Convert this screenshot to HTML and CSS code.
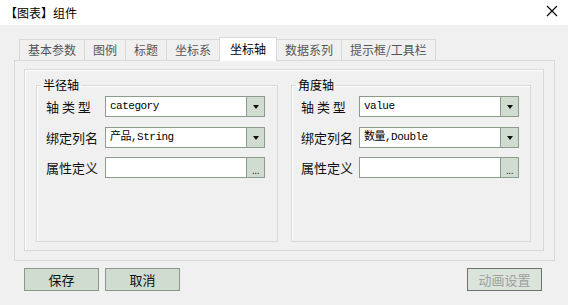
FILE: index.html
```html
<!DOCTYPE html>
<html lang="zh-CN">
<head>
    <meta charset="UTF-8">
    <title>【图表】组件</title>
    <link rel="stylesheet" href="styles.css">
</head>
<body>
    <div class="titlebar">
        <span class="title">【图表】组件</span>
        <svg class="close" width="12" height="12" viewBox="0 0 12 12">
            <path d="M1 1 L11 11 M11 1 L1 11" stroke="#000" stroke-width="1.1" fill="none"/>
        </svg>
    </div>

    <div class="tabs">
        <div class="tab">基本参数</div>
        <div class="tab">图例</div>
        <div class="tab">标题</div>
        <div class="tab">坐标系</div>
        <div class="tab active">坐标轴</div>
        <div class="tab">数据系列</div>
        <div class="tab">提示框/工具栏</div>
    </div>

    <div class="panel">
        <div class="frame">
            <fieldset class="group group-left">
                <legend>半径轴</legend>
                <div class="row">
                    <label class="spaced">轴 类 型</label>
                    <div class="field"><span class="value">category</span><span class="drop"><i></i></span></div>
                </div>
                <div class="row">
                    <label>绑定列名</label>
                    <div class="field"><span class="value">产品,String</span><span class="drop"><i></i></span></div>
                </div>
                <div class="row">
                    <label>属性定义</label>
                    <div class="field"><span class="value"></span><span class="drop dots">...</span></div>
                </div>
            </fieldset>
            <fieldset class="group group-right">
                <legend>角度轴</legend>
                <div class="row">
                    <label class="spaced">轴 类 型</label>
                    <div class="field"><span class="value">value</span><span class="drop"><i></i></span></div>
                </div>
                <div class="row">
                    <label>绑定列名</label>
                    <div class="field"><span class="value">数量,Double</span><span class="drop"><i></i></span></div>
                </div>
                <div class="row">
                    <label>属性定义</label>
                    <div class="field"><span class="value"></span><span class="drop dots">...</span></div>
                </div>
            </fieldset>
        </div>
    </div>

    <div class="actions">
        <button class="btn">保存</button>
        <button class="btn">取消</button>
        <button class="btn disabled">动画设置</button>
    </div>
</body>
</html>
```
FILE: styles.css
```css
body{
    margin: 0;
    width: 568px;
    height: 305px;
    background-color: #f0f0f0;
    font-family: "Noto Sans CJK SC", "Liberation Sans", sans-serif;
    color: #000;
    overflow: hidden;
}
.titlebar{
    height: 25px;
    background-color: #fff;
    display: flex;
    align-items: center;
    justify-content: space-between;
    padding: 0 10px 0 5px;
    font-size: 12px;
}
.title{
    margin-top: -1px;
}
.close{
    margin-top: -3px;
}
.tabs{
    display: flex;
    align-items: flex-end;
    height: 23px;
    margin-top: 12px;
    padding-left: 19px;
}
.tab{
    height: 21px;
    line-height: 20px;
    box-sizing: border-box;
    padding: 0 8px;
    border: 1px solid #d9d9d9;
    border-bottom: none;
    margin-right: -1px;
    font-size: 12px;
    color: #555;
}
.tab.active{
    height: 24px;
    line-height: 22px;
    padding: 0 10px;
    background-color: #fff;
    color: #000;
    margin-bottom: -1px;
    position: relative;
    z-index: 1;
}
.panel{
    width: 541px;
    height: 201px;
    box-sizing: border-box;
    margin-left: 14px;
    border: 1px solid #d9d9d9;
    padding: 8px 10px 9px 9px;
}
.frame{
    height: 182px;
    box-sizing: border-box;
    border: 1px solid #d9d9d9;
    box-shadow: inset 1px 1px 0 #fff;
    padding: 8px 12px 8px 11px;
    display: flex;
    gap: 13px;
}
.group{
    margin: 0;
    padding: 4px 0 0 9px;
    border: 1px solid #d9d9d9;
    box-shadow: inset 1px 1px 0 #fff;
    box-sizing: border-box;
    min-width: 0;
    display: flex;
    flex-direction: column;
    gap: 9.5px;
}
.group-left{
    width: 242px;
}
.group-right{
    width: 240px;
}
legend{
    font-size: 12px;
    line-height: 14px;
    padding: 0 2px;
    margin-left: -5px;
}
.row{
    display: flex;
    align-items: center;
    height: 21px;
}
label{
    width: 59px;
    font-size: 13px;
    color: #111;
}
.group-right label{
    width: 58px;
}
.spaced{
    letter-spacing: 0;
}
.field{
    width: 160px;
    height: 21px;
    box-sizing: border-box;
    border: 1px solid #8c9c8c;
    background-color: #fff;
    display: flex;
}
.value{
    flex: 1;
    padding-left: 4px;
    font-family: "Liberation Mono", "Noto Sans CJK SC", monospace;
    font-size: 11px;
    letter-spacing: -0.5px;
    line-height: 19px;
    white-space: nowrap;
}
.drop{
    width: 17px;
    border-left: 1px solid #8c9c8c;
    background-color: #cfdccf;
    display: flex;
    align-items: center;
    justify-content: center;
}
.drop i{
    width: 0;
    height: 0;
    border-left: 3px solid transparent;
    border-right: 3px solid transparent;
    border-top: 4px solid #111;
    margin-top: 1px;
}
.drop.dots{
    align-items: flex-end;
    font-size: 10px;
    line-height: 12px;
    font-family: "Liberation Sans", sans-serif;
    letter-spacing: -0.5px;
    color: #222;
}
.actions{
    display: flex;
    gap: 6px;
    padding: 7px 26px 0 24px;
}
.btn{
    width: 75px;
    height: 23px;
    box-sizing: border-box;
    border: 1px solid #8a998a;
    background-color: #cfdccf;
    font-family: "Noto Sans CJK SC", sans-serif;
    font-size: 13px;
    color: #111;
    padding: 0;
}
.btn.disabled{
    margin-left: auto;
    background-color: #dae4da;
    border-color: #707070;
    color: #a0a0a0;
}
```
